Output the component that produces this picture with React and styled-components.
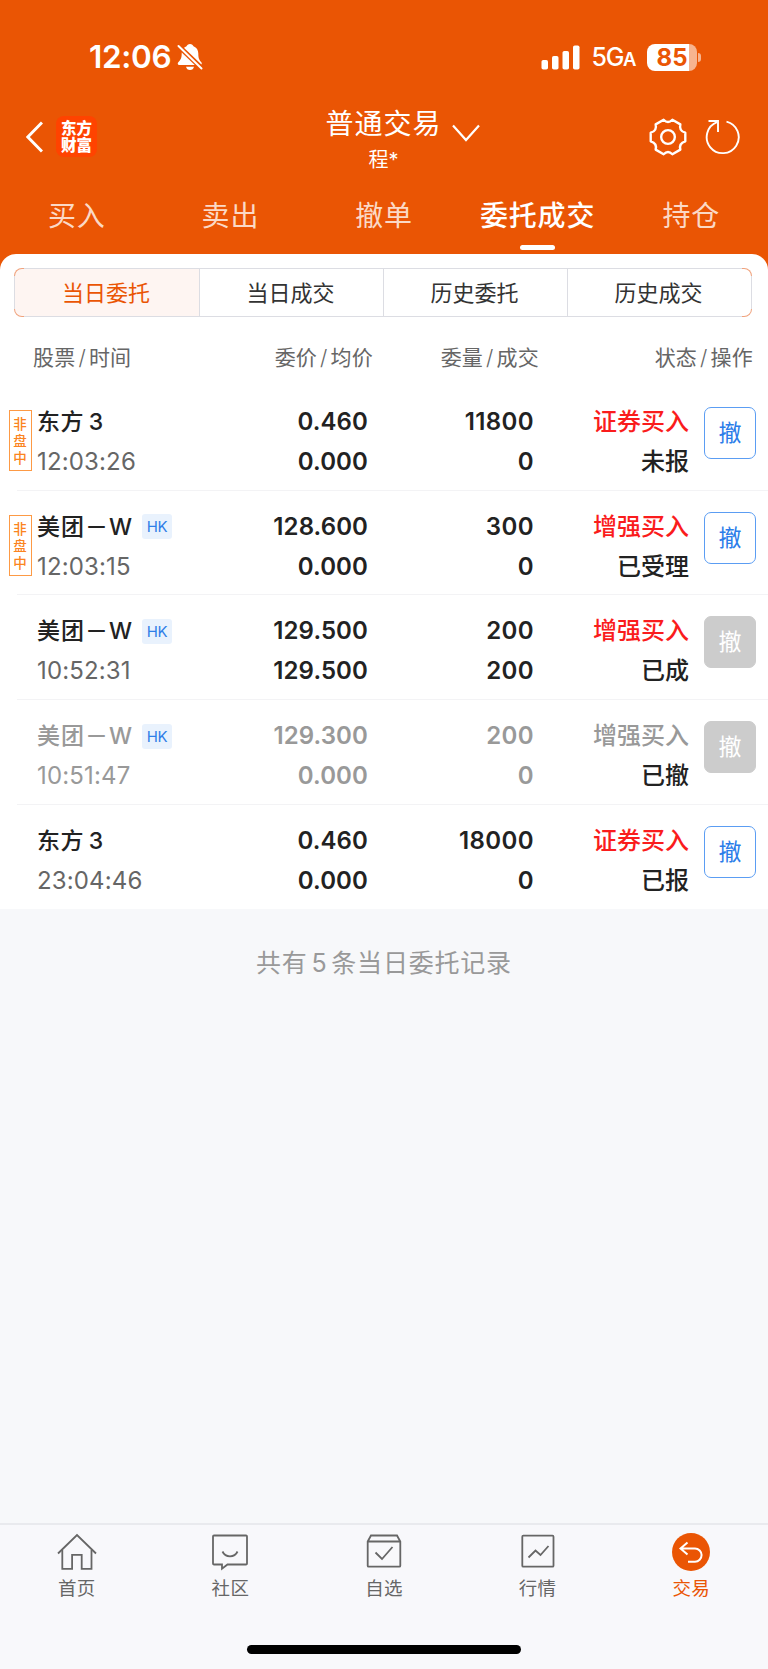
import styled, { createGlobalStyle, css } from 'styled-components'
import { useState } from 'react'

const GlobalStyle = createGlobalStyle`
  * {
    box-sizing: border-box;
  }
  body {
    margin: 0;
    background: #f7f8fa;
    font-family: Inter, 'Noto Sans CJK SC', sans-serif;
    color: #222;
  }
  button {
    font-family: inherit;
    margin: 0;
    padding: 0;
    background: none;
    border: none;
  }
`

const ORANGE = '#ea5504'

const Screen = styled.div`
  display: flex;
  flex-direction: column;
  width: 768px;
  height: 1669px;
  overflow: hidden;
  background: linear-gradient(${ORANGE} 300px, #f7f8fa 300px);
`

const StatusBar = styled.div`
  display: flex;
  align-items: center;
  height: 114px;
  padding: 0 67px 0 89px;
  color: #fff;
`

const Clock = styled.span`
  width: 88px;
  font-size: 31.5px;
  font-weight: 600;
  line-height: 40px;
  letter-spacing: -0.3px;
`

const StatusRight = styled.div`
  display: flex;
  align-items: center;
  margin-left: auto;
`

const Network = styled.span`
  margin: 2px 12px 0 12px;
  font-size: 25px;
  font-weight: 500;
  line-height: 30px;
  letter-spacing: -1.4px;
  small {
    font-size: 18.5px;
    font-weight: 600;
  }
`

const Battery = styled.div`
  width: 50px;
  height: 27px;
  border-radius: 8px;
  background: linear-gradient(90deg, #fff 42px, #f7b48f 42px);
  color: ${ORANGE};
  font-size: 24px;
  font-weight: 700;
  line-height: 27px;
  text-align: center;
`

const BatteryTip = styled.i`
  width: 3px;
  height: 9px;
  margin-left: 1px;
  border-radius: 0 4px 4px 0;
  background: #f7b48f;
`

const NavBar = styled.header`
  display: grid;
  grid-template-columns: 1fr auto 1fr;
  height: 70px;
  padding: 0 27px 0 26px;
  color: #fff;
`

const NavLeft = styled.div`
  display: flex;
  align-items: center;
  gap: 13px;
  height: 45px;
`

const Logo = styled.div`
  width: 41px;
  height: 41px;
  padding-top: 4px;
  border-radius: 8px;
  background: #ff4300;
  font-size: 15.5px;
  font-weight: 900;
  line-height: 17px;
  text-align: center;
`

const Title = styled.div`
  display: flex;
  padding-left: 38px;
  gap: 10px;
  svg {
    margin-top: 10px;
  }
`

const TitleText = styled.h1`
  margin: -11px 0 0;
  font-size: 28px;
  font-weight: 400;
  line-height: 42px;
  letter-spacing: 1px;
  text-align: center;
`

const Account = styled.div`
  font-size: 20px;
  line-height: 30px;
  letter-spacing: 0;
`

const NavRight = styled.div`
  display: flex;
  align-items: center;
  justify-content: flex-end;
  gap: 17px;
  height: 45px;
`

const Tabs = styled.nav`
  display: grid;
  grid-template-columns: repeat(5, 1fr);
  height: 70px;
`

const Tab = styled.button`
  display: flex;
  flex-direction: column;
  align-items: center;
  padding-top: 12px;
  color: ${({ $active }) => ($active ? '#fff' : '#fbd9c6')};
  font-size: 28px;
  font-weight: ${({ $active }) => ($active ? 500 : 400)};
  line-height: 40px;
  letter-spacing: 0.8px;
  &::after {
    content: '';
    width: 35px;
    height: 5px;
    margin-top: 9px;
    border-radius: 3px;
    background: ${({ $active }) => ($active ? '#fff' : 'transparent')};
  }
`

const Sheet = styled.main`
  padding-top: 14px;
  border-radius: 16px 16px 0 0;
  background: #fff;
`

// grey frame whose rounded corners stay orange
const Segments = styled.div`
  display: grid;
  grid-template-columns: repeat(4, 1fr);
  height: 49px;
  margin: 0 16px 0 14px;
  border: 1px solid transparent;
  border-radius: 8px;
  background:
    linear-gradient(#dcdde3, #dcdde3) center / 100% calc(100% - 16px) no-repeat border-box,
    linear-gradient(#dcdde3, #dcdde3) center / calc(100% - 20px) 100% no-repeat border-box,
    linear-gradient(#f0a27c, #f0a27c) border-box;
  overflow: hidden;
`

const Segment = styled.button`
  padding-right: 2px;
  border-left: 1px solid #dcdde3;
  background: ${({ $active }) => ($active ? '#fef5f2' : '#fff')};
  color: ${({ $active }) => ($active ? ORANGE : '#333')};
  font-size: 22px;
  line-height: 46px;
  &:first-child {
    border-left: none;
  }
`

const columns = css`
  display: grid;
  grid-template-columns: 190px 1fr 166px 155px 67px;
`

const ListHead = styled.div`
  display: grid;
  grid-template-columns: 192px 148px 166px 1fr;
  height: 69px;
  padding: 26px 15px 0 33px;
  color: #666;
  font-size: 21px;
  line-height: 30px;
  letter-spacing: 0.2px;
  text-align: right;
  span:first-child {
    text-align: left;
  }
  i {
    margin: 0 3px;
    font-style: normal;
    font-weight: 300;
  }
`

const OrderRow = styled.div`
  ${columns}
  position: relative;
  height: 104.7px;
  padding: 16px 12px 0 37px;
  color: ${({ $muted }) => ($muted ? '#999' : '#222')};
  font-size: 24px;
  font-weight: 600;
  line-height: 40px;
  text-align: right;
  &:not(:last-child)::after {
    content: '';
    position: absolute;
    left: 17px;
    right: 0;
    bottom: 0;
    height: 1px;
    background: #f3f3f5;
  }
`

const Stock = styled.div`
  text-align: left;
`

const StockName = styled.div`
  display: flex;
  align-items: center;
  height: 40px;
  font-size: 23px;
  font-weight: 500;
  letter-spacing: ${({ $hk }) => ($hk ? '1px' : '0.5px')};
  word-spacing: -2px;
  white-space: pre;
`

const Market = styled.span`
  width: 30px;
  height: 25px;
  margin-left: 9px;
  border-radius: 3px;
  background: #e9f2fd;
  color: #2f7fe8;
  font-size: 15px;
  font-weight: 400;
  line-height: 26px;
  letter-spacing: -0.3px;
  text-align: center;
`

const Time = styled.div`
  color: ${({ $muted }) => ($muted ? '#999' : '#666')};
  font-weight: 400;
  letter-spacing: 0.15px;
`

const Price = styled.div`
  letter-spacing: 0.1px;
`

const Quantity = styled.div`
  letter-spacing: 0.4px;
`

const Side = styled.div`
  color: ${({ $muted }) => ($muted ? '#999' : '#fa1c1c')};
  font-size: 24px;
  font-weight: 500;
`

const State = styled.div`
  color: #222;
  font-size: 24px;
  font-weight: 500;
`

const SessionTag = styled.div`
  position: absolute;
  left: 9px;
  top: 24px;
  width: 23px;
  height: 61px;
  padding: 5px 4px 0 3px;
  border: 1px solid #fd9a45;
  color: #fb8420;
  font-size: 13.5px;
  font-weight: 500;
  line-height: 17px;
  text-align: center;
`

const CancelButton = styled.button`
  justify-self: end;
  width: 52px;
  height: 52px;
  margin-top: 5px;
  border: 1px solid ${({ disabled }) => (disabled ? '#ccc' : '#5b9df3')};
  border-radius: 7px;
  background: ${({ disabled }) => (disabled ? '#ccc' : '#fff')};
  color: ${({ disabled }) => (disabled ? '#fff' : '#2b7de9')};
  font-size: 23px;
  line-height: 50px;
`

const Summary = styled.p`
  flex: 1;
  margin: 0;
  padding-top: 34px;
  color: #999;
  font-size: 25px;
  line-height: 40px;
  letter-spacing: 0.8px;
  word-spacing: -4px;
  text-align: center;
  background: #f7f8fa;
`

const TabBar = styled.footer`
  height: 146px;
  border-top: 2px solid #e9eaee;
  background: #f8f8fb;
`

const TabItems = styled.div`
  display: grid;
  grid-template-columns: repeat(5, 1fr);
  height: 120px;
`

const TabItem = styled.button`
  display: flex;
  flex-direction: column;
  align-items: center;
  padding-top: 8px;
  color: ${({ $active }) => ($active ? ORANGE : '#666')};
  font-size: 18.5px;
  line-height: 30px;
  letter-spacing: 0.3px;
`

const HomeIndicator = styled.div`
  width: 274px;
  height: 9px;
  margin: 0 auto;
  border-radius: 5px;
  background: #000;
`

const BellOff = () => (
  <svg width="26" height="28" viewBox="0 0 26 28" fill="#fff">
    <path d="M13 1c1.900 0 3 1 3.500 2.300 3.200 1.200 4.800 4 4.800 7.200 0 5 1 6.600 3 8.700.9 1 .5 2.800-1 2.800H2.200C.7 22 .3 20.200 1.300 19.200c2-2.100 3.400-3.700 3.400-8.700 0-3.200 1.600-6 4.800-7.200C10 2 11.100 1 13 1z" />
    <path d="M9 23.800h8c-.4 2-1.900 3.300-4 3.300s-3.600-1.300-4-3.300z" />
    <path d="M1 2.500l24 23" stroke={ORANGE} strokeWidth="5" />
    <path d="M1.500 3l23 22.500" stroke="#fff" strokeWidth="2" strokeLinecap="round" />
  </svg>
)

const Signal = () => (
  <svg width="39" height="25" viewBox="0 0 39 25" fill="#fff">
    <rect x="0.500" y="15" width="6.500" height="9.500" rx="1.800" />
    <rect x="11" y="11" width="6.500" height="13.500" rx="1.800" />
    <rect x="21.500" y="6" width="6.500" height="18.500" rx="1.800" />
    <rect x="32" y="0.500" width="6.500" height="24" rx="1.800" />
  </svg>
)

const BackIcon = () => (
  <svg width="17" height="32" viewBox="0 0 17 32" fill="none" stroke="#fff" strokeWidth="3">
    <path d="M16 1.500L1.800 16 16 30.500" />
  </svg>
)

const DownIcon = () => (
  <svg width="28" height="18" viewBox="0 0 28 18" fill="none" stroke="#fff" strokeWidth="2.200">
    <path d="M1 1.500l13 14.500 13-14.500" />
  </svg>
)

const GearIcon = () => (
  <svg width="40" height="38" viewBox="-1 -1 42 40" fill="none" stroke="#fff" strokeWidth="2.500" strokeLinejoin="round">
    <path d="M24.600 0.800L33 5.700Q31.300 12.500 38.200 14.500V23.500Q31.300 25.500 33 32.300L24.600 37.200Q20 32.500 15.400 37.200L7 32.300Q8.700 25.500 1.800 23.500V14.500Q8.700 12.500 7 5.700L15.400 0.800Q20 5.500 24.600 0.800z" />
    <circle cx="20" cy="19" r="7.200" />
  </svg>
)

const RefreshIcon = () => (
  <svg width="36" height="36" viewBox="0 0 36 36" fill="none" stroke="#fff" strokeWidth="1.900">
    <path d="M21.500 2.600A16 16 0 1 1 12 3.200" />
    <path d="M3.500 2h9.500v11" />
  </svg>
)

const HomeIcon = () => (
  <>
    <path d="M1 20.500L20 2l19 18.500" />
    <path d="M5.300 17v18.800h9.800V21.800h9.600v14h9.800V17" />
  </>
)

const CommunityIcon = () => (
  <>
    <path d="M4 2.500h32a1 1 0 0 1 1 1V30.500a1 1 0 0 1-1 1H17.500l-5.500 4.200v-4.200H4a1 1 0 0 1-1-1V3.500a1 1 0 0 1 1-1z" />
    <path d="M12.500 18.500c3 6.500 12 6.500 15 0" />
  </>
)

const WatchIcon = () => (
  <>
    <path d="M3.700 8.500L7 2.500h26l3.300 6v24.200a1 1 0 0 1-1 1H4.700a1 1 0 0 1-1-1zM3.700 8.500h32.600" />
    <path d="M11.500 19.500l6.500 6.500 10.500-12" />
  </>
)

const MarketIcon = () => (
  <>
    <rect x="4.300" y="2.700" width="31.200" height="31" rx="1" />
    <path d="M10.500 24.500l7-7 5 4.500 8-9" />
  </>
)

const TradeIcon = () => (
  <>
    <circle cx="20" cy="19" r="19" fill={ORANGE} stroke="none" />
    <path
      d="M16.500 9.500l-7 6 7 6M9.500 15.500h14.500a6.600 6.600 0 0 1 0 13.200h-7"
      stroke="#fff"
      strokeWidth="2"
    />
  </>
)

const tabs = ['买入', '卖出', '撤单', '委托成交', '持仓']
const segments = ['当日委托', '当日成交', '历史委托', '历史成交']
const heads = [
  ['股票', '时间'],
  ['委价', '均价'],
  ['委量', '成交'],
  ['状态', '操作'],
]

const orders = [
  { id: 1, name: '东方 3', time: '12:03:26', price: '0.460', avg: '0.000', qty: 11800, done: 0, side: '证券买入', state: '未报', offHours: true, canCancel: true },
  { id: 2, name: '美团－W', hk: true, time: '12:03:15', price: '128.600', avg: '0.000', qty: 300, done: 0, side: '增强买入', state: '已受理', offHours: true, canCancel: true },
  { id: 3, name: '美团－W', hk: true, time: '10:52:31', price: '129.500', avg: '129.500', qty: 200, done: 200, side: '增强买入', state: '已成' },
  { id: 4, name: '美团－W', hk: true, time: '10:51:47', price: '129.300', avg: '0.000', qty: 200, done: 0, side: '增强买入', state: '已撤', muted: true },
  { id: 5, name: '东方 3', time: '23:04:46', price: '0.460', avg: '0.000', qty: 18000, done: 0, side: '证券买入', state: '已报', canCancel: true },
]

const tabItems = [
  { label: '首页', Icon: HomeIcon },
  { label: '社区', Icon: CommunityIcon },
  { label: '自选', Icon: WatchIcon },
  { label: '行情', Icon: MarketIcon },
  { label: '交易', Icon: TradeIcon },
]

function Order({ order }) {
  const { muted, hk } = order
  return (
    <OrderRow $muted={muted}>
      {order.offHours && <SessionTag>非盘中</SessionTag>}
      <Stock>
        <StockName $hk={hk}>
          {order.name}
          {hk && <Market>HK</Market>}
        </StockName>
        <Time $muted={muted}>{order.time}</Time>
      </Stock>
      <Price>
        <div>{order.price}</div>
        <div>{order.avg}</div>
      </Price>
      <Quantity>
        <div>{order.qty}</div>
        <div>{order.done}</div>
      </Quantity>
      <div>
        <Side $muted={muted}>{order.side}</Side>
        <State>{order.state}</State>
      </div>
      <CancelButton disabled={!order.canCancel}>撤</CancelButton>
    </OrderRow>
  )
}

function App() {
  const [tab, setTab] = useState('委托成交')
  const [segment, setSegment] = useState('当日委托')
  const [page, setPage] = useState('交易')

  return (
    <Screen>
      <GlobalStyle />
      <StatusBar>
        <Clock>12:06</Clock>
        <BellOff />
        <StatusRight>
          <Signal />
          <Network>
            5G<small>A</small>
          </Network>
          <Battery>85</Battery>
          <BatteryTip />
        </StatusRight>
      </StatusBar>
      <NavBar>
        <NavLeft>
          <BackIcon />
          <Logo>
            东方
            <br />
            财富
          </Logo>
        </NavLeft>
        <Title>
          <TitleText>
            普通交易
            <Account>程*</Account>
          </TitleText>
          <DownIcon />
        </Title>
        <NavRight>
          <GearIcon />
          <RefreshIcon />
        </NavRight>
      </NavBar>
      <Tabs>
        {tabs.map(name => (
          <Tab key={name} $active={name === tab} onClick={() => setTab(name)}>
            {name}
          </Tab>
        ))}
      </Tabs>
      <Sheet>
        <Segments>
          {segments.map(name => (
            <Segment
              key={name}
              $active={name === segment}
              onClick={() => setSegment(name)}
            >
              {name}
            </Segment>
          ))}
        </Segments>
        <ListHead>
          {heads.map(([first, second]) => (
            <span key={first}>
              {first}
              <i>/</i>
              {second}
            </span>
          ))}
        </ListHead>
        <div>
          {orders.map(order => (
            <Order key={order.id} order={order} />
          ))}
        </div>
      </Sheet>
      <Summary>共有 5 条当日委托记录</Summary>
      <TabBar>
        <TabItems>
          {tabItems.map(({ label, Icon }) => (
            <TabItem
              key={label}
              $active={label === page}
              onClick={() => setPage(label)}
            >
              <svg
                width="40"
                height="40"
                viewBox="0 0 40 40"
                fill="none"
                stroke="#666"
                strokeWidth="1.800"
              >
                <Icon />
              </svg>
              {label}
            </TabItem>
          ))}
        </TabItems>
        <HomeIndicator />
      </TabBar>
    </Screen>
  )
}
export default App
